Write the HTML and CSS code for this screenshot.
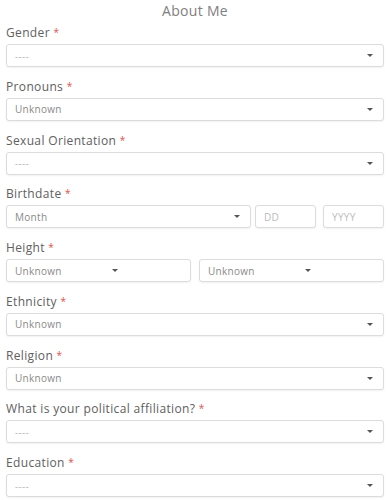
FILE: index.html
```html
<!DOCTYPE html>
<html lang="en">
<head>
  <meta charset="UTF-8">
  <meta name="viewport" content="width=device-width, initial-scale=1.0">
  <title>About Me</title>
  <link rel="stylesheet" href="styles.css">
</head>
<body>
  <form class="about_form">
    <h2 class="form_tit">About Me</h2>

    <div class="field">
      <label class="field_label">Gender <span class="req">*</span></label>
      <div class="select_box"><span class="placeholder">----</span><i class="caret"></i></div>
    </div>

    <div class="field">
      <label class="field_label">Pronouns <span class="req">*</span></label>
      <div class="select_box"><span class="value">Unknown</span><i class="caret"></i></div>
    </div>

    <div class="field">
      <label class="field_label">Sexual Orientation <span class="req">*</span></label>
      <div class="select_box"><span class="placeholder">----</span><i class="caret"></i></div>
    </div>

    <div class="field">
      <label class="field_label">Birthdate <span class="req">*</span></label>
      <div class="field_row">
        <div class="select_box month"><span class="value">Month</span><i class="caret"></i></div>
        <div class="text_box day"><span class="placeholder">DD</span></div>
        <div class="text_box year"><span class="placeholder">YYYY</span></div>
      </div>
    </div>

    <div class="field">
      <label class="field_label">Height <span class="req">*</span></label>
      <div class="field_row height_row">
        <div class="select_box half"><span class="value">Unknown</span><i class="caret"></i></div>
        <div class="select_box half"><span class="value">Unknown</span><i class="caret"></i></div>
      </div>
    </div>

    <div class="field">
      <label class="field_label">Ethnicity <span class="req">*</span></label>
      <div class="select_box"><span class="value">Unknown</span><i class="caret"></i></div>
    </div>

    <div class="field">
      <label class="field_label">Religion <span class="req">*</span></label>
      <div class="select_box"><span class="value">Unknown</span><i class="caret"></i></div>
    </div>

    <div class="field">
      <label class="field_label">What is your political affiliation? <span class="req">*</span></label>
      <div class="select_box"><span class="placeholder">----</span><i class="caret"></i></div>
    </div>

    <div class="field">
      <label class="field_label">Education <span class="req">*</span></label>
      <div class="select_box"><span class="placeholder">----</span><i class="caret"></i></div>
    </div>
  </form>
</body>
</html>
```

FILE: styles.css
```css
*{margin:0;padding:0;box-sizing:border-box;}
html,body{width:100%;height:100%;background:#fff;}
body{font-family:"Open Sans","DejaVu Sans",sans-serif;color:#555;}
.about_form{padding:0 6px;}
.form_tit{text-align:center;font-size:14px;font-weight:normal;line-height:22px;color:#808080;letter-spacing:.3px;}
.field{margin-bottom:8.75px;}
.field_label{display:block;font-size:12px;line-height:20px;margin-bottom:1px;color:#606060;letter-spacing:.35px;}
.req{color:#d9534f;font-size:10px;vertical-align:1px;}
.select_box,.text_box{display:flex;align-items:center;height:23px;padding:0 8px;border:1px solid #dcdcdc;border-radius:3px;background:#fff;box-shadow:0 1px 2px rgba(0,0,0,.06);font-size:10px;letter-spacing:.3px;}
.select_box{justify-content:space-between;}
.placeholder{color:#bbb;}
.value{color:#8a8a8a;}
.caret{display:block;width:0;height:0;border-left:3px solid transparent;border-right:3px solid transparent;border-top:3px solid #555;margin-right:2px;}
.field_row{display:flex;gap:4px;}
.month{flex:1;}
.day{width:61px;margin-right:3px;}
.year{width:61px;}
.height_row{gap:8px;}
.half{flex:1;padding-right:70px;}
```
